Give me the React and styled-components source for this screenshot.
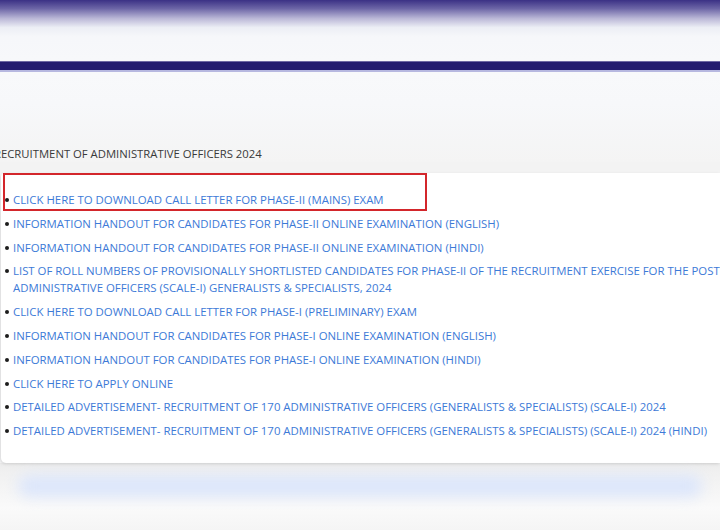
import React from "react";
import styled, { createGlobalStyle } from "styled-components";

const Global = createGlobalStyle`
  html, body { margin: 0; padding: 0; }
  body {
    width: 720px;
    height: 530px;
    overflow: hidden;
    background: #f6f6f7;
    font-family: "Open Sans", "Noto Sans", Arial, sans-serif;
  }
`;

const Page = styled.div`
  width: 720px;
  height: 530px;
  overflow: hidden;
  display: flex;
  flex-direction: column;
`;

const Header = styled.div`
  height: 61px;
  flex: none;
  background: linear-gradient(
    to bottom,
    #3b3185 0%,
    #6c65a6 14%,
    #b9b6d6 30%,
    #eceef5 45%,
    #f6f7fa 60%,
    #f7f8fa 100%
  );
`;

const NavBar = styled.div`
  height: 8px;
  flex: none;
  background: #231c6f;
  border-top: 1px solid #6d68a3;
  border-bottom: 2px solid #b7b8e0;
`;

const Band = styled.div`
  flex: none;
  height: 90px;
  background: linear-gradient(to bottom, #f8f9fb 0%, #f7f8fa 35%, #f4f4f4 100%);
  display: flex;
  align-items: flex-end;
`;

const Title = styled.h2`
  margin: 0 0 0 -6px;
  font-size: 11.3px;
  font-weight: 400;
  color: #3a3a3a;
  line-height: 16px;
`;

const Gap = styled.div`
  height: 11px;
  flex: none;
  background: #f3f3f3;
`;

const Panel = styled.div`
  position: relative;
  flex: none;
  margin-left: 1px;
  background: #ffffff;
  border-radius: 4px 0 0 5px;
  box-shadow: -1px 1px 3px rgba(0, 0, 0, 0.12);
  padding: 18px 0 24px 4px;
`;

const List = styled.ul`
  list-style: none;
  margin: 0;
  padding: 0;
  display: flex;
  flex-direction: column;
  gap: 6.8px;
`;

const Item = styled.li`
  display: flex;
  align-items: flex-start;
`;

const Bullet = styled.span`
  flex: none;
  width: 4px;
  height: 4px;
  border-radius: 50%;
  background: #1c1c1c;
  margin: 7px 4px 0 0;
`;

const Link = styled.a`
  font-size: 11.4px;
  line-height: 17px;
  color: #3d7ad7;
  text-decoration: none;
  white-space: ${(p) => (p.$wrap ? "normal" : "nowrap")};
`;

const Highlight = styled.div`
  position: absolute;
  left: 2px;
  top: 0;
  width: 420px;
  height: 34px;
  border: 2px solid #d3262b;
  pointer-events: none;
`;

const Bottom = styled.div`
  flex: 1;
  display: flex;
  flex-direction: column;
  background: linear-gradient(to bottom, #ebebeb 0px, #f0f0f0 8px, #fafafa 45px, #f5f5f5 100%);
`;

const BlurStripe = styled.div`
  margin: 12px 18px 0 18px;
  height: 22px;
  border-radius: 11px;
  background: #dce6fb;
  filter: blur(7px);
`;

const items = [
  "CLICK HERE TO DOWNLOAD CALL LETTER FOR PHASE-II (MAINS) EXAM",
  "INFORMATION HANDOUT FOR CANDIDATES FOR PHASE-II ONLINE EXAMINATION (ENGLISH)",
  "INFORMATION HANDOUT FOR CANDIDATES FOR PHASE-II ONLINE EXAMINATION (HINDI)",
  "LIST OF ROLL NUMBERS OF PROVISIONALLY SHORTLISTED CANDIDATES FOR PHASE-II OF THE RECRUITMENT EXERCISE FOR THE POST ADMINISTRATIVE OFFICERS (SCALE-I) GENERALISTS & SPECIALISTS, 2024",
  "CLICK HERE TO DOWNLOAD CALL LETTER FOR PHASE-I (PRELIMINARY) EXAM",
  "INFORMATION HANDOUT FOR CANDIDATES FOR PHASE-I ONLINE EXAMINATION (ENGLISH)",
  "INFORMATION HANDOUT FOR CANDIDATES FOR PHASE-I ONLINE EXAMINATION (HINDI)",
  "CLICK HERE TO APPLY ONLINE",
  "DETAILED ADVERTISEMENT- RECRUITMENT OF 170 ADMINISTRATIVE OFFICERS (GENERALISTS & SPECIALISTS) (SCALE-I) 2024",
  "DETAILED ADVERTISEMENT- RECRUITMENT OF 170 ADMINISTRATIVE OFFICERS (GENERALISTS & SPECIALISTS) (SCALE-I) 2024 (HINDI)",
];

export default function App() {
  return (
    <Page>
      <Global />
      <Header />
      <NavBar />
      <Band>
        <Title>RECRUITMENT OF ADMINISTRATIVE OFFICERS 2024</Title>
      </Band>
      <Gap />
      <Panel>
        <List>
          {items.map((t, i) => (
            <Item key={i}>
              <Bullet />
              <Link href="#" $wrap={i === 3}>
                {t}
              </Link>
            </Item>
          ))}
        </List>
        <Highlight />
      </Panel>
      <Bottom>
        <BlurStripe />
      </Bottom>
    </Page>
  );
}
